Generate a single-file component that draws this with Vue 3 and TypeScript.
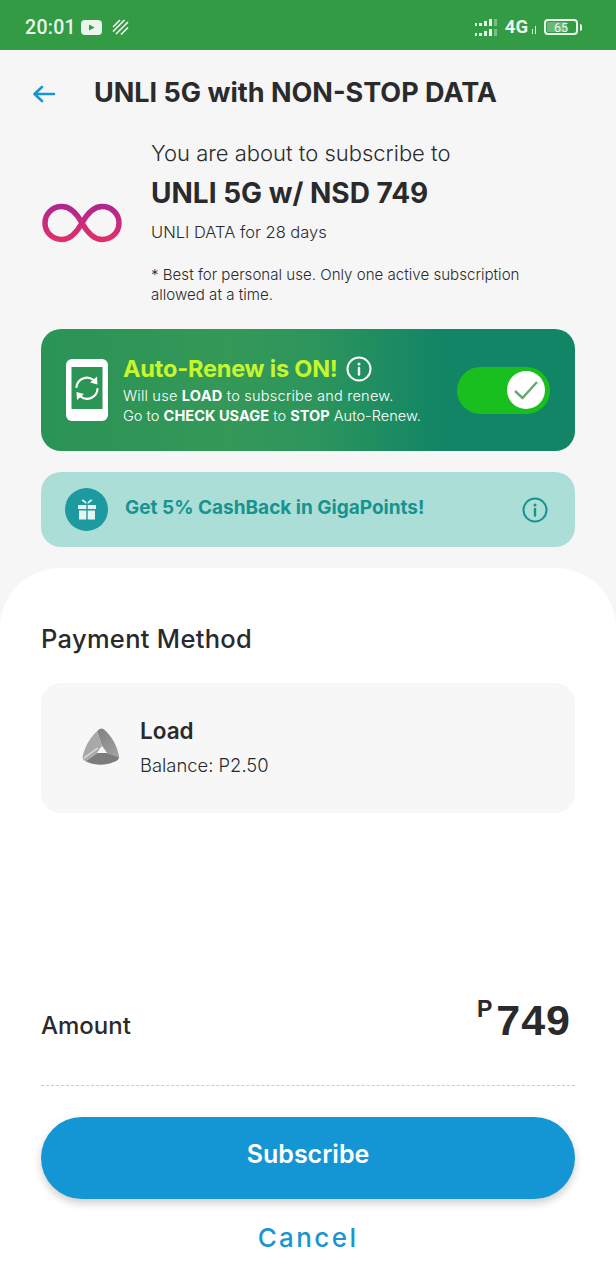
<script setup lang="ts">
const signalRows: number[] = [0, 1];
const bars: { w: number; h: number; o: number }[] = [
  { w: 2, h: 3, o: 1 },
  { w: 3, h: 3, o: 1 },
  { w: 3, h: 5, o: 1 },
  { w: 3, h: 7, o: 1 },
  { w: 3, h: 7, o: 0.4 }
];
</script>

<template>
  <div class="screen">
    <div class="status">
      <div class="status-left">
        <span class="time">20:01</span>
        <svg class="yt" width="21" height="15" viewBox="0 0 21 15"><rect width="21" height="15" rx="4" fill="#eaf5ec"/><path d="M8 4.600 13.600 7.500 8 10.400Z" fill="#339b44"/></svg>
        <svg class="stripe" width="17" height="17" viewBox="0 0 17 17" fill="none" stroke="#eaf5ec" stroke-width="1.700"><path d="M1 8 8 1M1 12.500 12.500 1M4 15 16 3M9 15.500 16 8.500"/></svg>
      </div>
      <div class="status-right">
        <div class="signal">
          <div v-for="r in signalRows" :key="r" class="signal-row">
            <i v-for="(b, n) in bars" :key="n" :style="{ width: b.w + 'px', height: b.h + 'px', opacity: b.o }"></i>
          </div>
        </div>
        <span class="net">4G</span>
        <svg width="6" height="8" viewBox="0 0 6 8" class="arrows" stroke="#eaf5ec" stroke-width="1" fill="none"><path d="M1.500 8V3M4.500 8V0"/></svg>
        <div class="battery"><div class="cell"><div class="fill"></div><span>65</span></div><i class="tip"></i></div>
      </div>
    </div>

    <div class="header">
      <svg class="back" width="24" height="20" viewBox="0 0 24 20" fill="none" stroke="#1a95d3" stroke-width="2.600" stroke-linecap="round" stroke-linejoin="round"><path d="M22 10H3M10 3 2.500 10 10 17"/></svg>
      <h1>UNLI 5G with NON-STOP DATA</h1>
    </div>

    <div class="offer">
      <svg class="infinity" width="82" height="42" viewBox="0 0 82 42" fill="none">
        <defs><linearGradient id="inf" x1="0" y1="0" x2="0" y2="1"><stop offset="0" stop-color="#b0278f"/><stop offset="1" stop-color="#e0306a"/></linearGradient></defs>
        <path d="M41 21C36 12 30 4.500 21 4.500 11.500 4.500 4 11.500 4 21 4 30.500 11.500 37.500 21 37.500 30 37.500 36 30 41 21 46 12 52 4.500 61 4.500 70.500 4.500 78 11.500 78 21 78 30.500 70.500 37.500 61 37.500 52 37.500 46 30 41 21Z" stroke="url(#inf)" stroke-width="5.500"/>
      </svg>
      <div class="offer-text">
        <p class="lead">You are about to subscribe to</p>
        <p class="plan">UNLI 5G w/ NSD 749</p>
        <p class="desc">UNLI DATA for 28 days</p>
        <p class="note">* Best for personal use. Only one active subscription allowed at a time.</p>
      </div>
    </div>

    <section class="renew">
      <svg class="phone" width="42" height="62" viewBox="0 0 42 62">
        <rect width="42" height="62" rx="6" fill="#fff"/>
        <rect x="5.500" y="8" width="31" height="42" fill="#2c9455"/>
        <g fill="none" stroke="#fff" stroke-width="2.200" stroke-linecap="round">
          <path d="M10.500 28a10.500 10.500 0 0 1 17-7"/>
          <path d="M31.500 30a10.500 10.500 0 0 1-17 7.500"/>
        </g>
        <path d="M31 17.500 31.500 25.500 24 23.500Z M11 41 10.500 33 18 35Z" fill="#fff"/>
      </svg>
      <div class="renew-text">
        <div class="renew-title">
          <span>Auto-Renew is ON!</span>
          <svg width="26" height="26" viewBox="0 0 26 26" fill="none"><circle cx="13" cy="13" r="11.500" stroke="#fff" stroke-width="2"/><circle cx="13" cy="8" r="1.500" fill="#fff"/><path d="M13 12v6.500" stroke="#fff" stroke-width="2.400" stroke-linecap="round"/></svg>
        </div>
        <p class="wide">Will use <b>LOAD</b> to subscribe and renew.</p>
        <p>Go to <b>CHECK USAGE</b> to <b>STOP</b> Auto-Renew.</p>
      </div>
      <div class="toggle">
        <div class="knob">
          <svg width="28" height="24" viewBox="0 0 28 24" fill="none"><path d="M3 13 10.500 20 25 4" stroke="#62a86f" stroke-width="2.400"/></svg>
        </div>
      </div>
    </section>

    <section class="cashback">
      <div class="gift">
        <svg width="20" height="21" viewBox="0 0 20 21" fill="#e6f5f4"><rect x="1" y="6" width="8.300" height="4"/><rect x="10.700" y="6" width="8.300" height="4"/><rect x="2" y="11.500" width="7.300" height="9"/><rect x="10.700" y="11.500" width="7.300" height="9"/><path d="M9.300 5 4.500 1.500 6 .3 9.300 3ZM10.700 5 15.500 1.500 14 .3 10.700 3Z"/></svg>
      </div>
      <span class="cash-text">Get 5% CashBack in GigaPoints!</span>
      <svg class="cash-info" width="26" height="26" viewBox="0 0 26 26" fill="none"><circle cx="13" cy="13" r="11.500" stroke="#17938f" stroke-width="2"/><circle cx="13" cy="8" r="1.500" fill="#17938f"/><path d="M13 12v6.500" stroke="#17938f" stroke-width="2.400" stroke-linecap="round"/></svg>
    </section>

    <section class="sheet">
      <h2>Payment Method</h2>
      <div class="method">
        <svg class="load-logo" width="38" height="38" viewBox="0 0 38 38">
          <defs>
            <clipPath id="tri"><path d="M17 1.500Q19.500-.5 22 1.500C29 7 35 17 37 28Q37.500 31 35 32.500C25 38 13 38 3 33Q0 31.500.7 28.500C3 17 10 7 17 1.500Z"/></clipPath>
            <linearGradient id="rightSec" x1="0" y1="0" x2="1" y2="1"><stop offset="0" stop-color="#7f7f7f"/><stop offset="1" stop-color="#a6a6a6"/></linearGradient>
          </defs>
          <g clip-path="url(#tri)">
            <path d="M20 18 14 0H40V30L25 25Z" fill="url(#rightSec)"/>
            <path d="M25 25 40 30V40H0V36L15 25Z" fill="#7c7c7c"/>
            <path d="M15 25 0 36V0H14L20 18Z" fill="#a8a8a8"/>
            <path d="M2 30 16 20" stroke="#d4d4d4" stroke-width="1.600"/>
            <path d="M20 18 25 25H15Z" fill="#f7f7f7"/>
          </g>
        </svg>
        <div>
          <p class="method-name">Load</p>
          <p class="method-bal">Balance: P2.50</p>
        </div>
      </div>
      <div class="amount">
        <span class="amount-label">Amount</span>
        <span class="amount-value"><sup>P</sup>749</span>
      </div>
      <div class="dash"></div>
      <button class="subscribe" type="button">Subscribe</button>
      <button class="cancel" type="button">Cancel</button>
    </section>
  </div>
</template>

<style>
html, body { margin: 0; background: #fff; }
</style>

<style scoped>
.screen { width: 616px; height: 1280px; display: flex; flex-direction: column; background: #f6f6f7; overflow: hidden; font-family: Inter, "Noto Sans", sans-serif; color: #2a2a2c; }
p, h1, h2 { margin: 0; }
.status { height: 50px; flex: none; background: #339b44; display: flex; justify-content: space-between; align-items: center; padding: 4px 34px 0 25px; box-sizing: border-box; color: #eaf5ec; font-family: Roboto, sans-serif; }
.status-left, .status-right { display: flex; align-items: center; }
.time { font-size: 19.500px; font-weight: 500; letter-spacing: .3px; }
.yt { margin-left: 5px; }
.stripe { margin-left: 10px; }
.signal { display: flex; flex-direction: column; gap: 3px; }
.signal-row { display: flex; align-items: flex-end; gap: 2px; height: 7px; }
.signal-row i { display: block; background: #eaf5ec; }
.net { font-size: 18.500px; font-weight: 700; margin-left: 8px; }
.arrows { margin: 5px 0 0 3px; }
.battery { display: flex; align-items: center; margin-left: 7px; }
.cell { width: 30px; height: 12px; border: 2px solid #eaf5ec; border-radius: 4px; position: relative; display: flex; align-items: center; justify-content: center; font-size: 12.500px; }
.fill { position: absolute; left: 1px; top: 1px; bottom: 1px; width: 65%; background: rgba(255,255,255,.28); border-radius: 1px; }
.cell span { position: relative; }
.tip { display: block; width: 2px; height: 7px; background: #eaf5ec; margin-left: 2px; border-radius: 0 2px 2px 0; }

.header { display: flex; align-items: center; height: 84px; flex: none; padding-left: 32px; box-sizing: border-box; }
.back { margin-top: 4px; }
.header h1 { font-size: 27px; font-weight: 700; margin-left: 38px; white-space: nowrap; color: #2b2b2d; }

.offer { display: flex; padding-left: 41px; height: 195px; flex: none; box-sizing: border-box; }
.infinity { margin-top: 68px; flex: none; }
.offer-text { margin-left: 28px; padding-top: 7px; }
.lead { font-size: 22px; font-weight: 300; line-height: 24px; white-space: nowrap; }
.plan { font-size: 28px; font-weight: 700; line-height: 34px; margin-top: 11px; white-space: nowrap; }
.desc { font-size: 16.500px; font-weight: 300; line-height: 22px; margin-top: 11px; white-space: nowrap; }
.note { font-size: 15.100px; font-weight: 300; line-height: 20px; margin-top: 22px; width: 400px; }

.renew { margin: 0 41px; height: 122px; flex: none; border-radius: 20px; box-sizing: border-box; padding: 0 25px; display: flex; align-items: center; background: linear-gradient(90deg, #2a9356 0%, #349858 35%, #2c955d 52%, #128566 75%, #128566 100%); color: #fff; }
.phone { flex: none; }
.renew-text { margin-left: 15px; flex: 1; }
.renew-title { display: flex; align-items: center; gap: 8px; font-size: 23.500px; font-weight: 700; color: #c6f62d; margin-bottom: 3px; letter-spacing: -.2px; white-space: nowrap; }
.renew-text p { font-size: 14.600px; line-height: 20px; font-weight: 300; white-space: nowrap; }
.renew-text p.wide { letter-spacing: .19px; }
.renew-text b { font-weight: 700; }
.toggle { width: 93px; height: 47px; flex: none; border-radius: 24px; background: #19bf1f; display: flex; align-items: center; justify-content: flex-end; padding-right: 5px; box-sizing: border-box; }
.knob { width: 38px; height: 38px; border-radius: 50%; background: #fff; display: flex; align-items: center; justify-content: center; }

.cashback { margin: 21px 41px 0; height: 75px; flex: none; box-sizing: border-box; border-radius: 20px; background: #abded7; padding: 0 27px 0 24px; display: flex; align-items: center; }
.gift { width: 43px; height: 43px; border-radius: 50%; background: #1c9aa0; display: flex; align-items: center; justify-content: center; flex: none; }
.cash-text { margin-left: 17px; padding-bottom: 4px; flex: 1; font-size: 19px; font-weight: 700; color: #17938f; white-space: nowrap; }
.cash-info { flex: none; }

.sheet { margin-top: 21px; flex: 1; background: #fff; border-radius: 60px 60px 0 0; padding: 56px 41px 0; display: flex; flex-direction: column; }
.sheet h2 { font-size: 25.500px; font-weight: 500; line-height: 30px; letter-spacing: .3px; }
.method { margin-top: 29px; height: 130px; flex: none; background: #f7f7f7; border-radius: 20px; display: flex; align-items: center; padding: 0 0 3px 41px; box-sizing: border-box; }
.load-logo { margin-right: 20px; }
.method-name { font-size: 22.500px; font-weight: 600; line-height: 28px; }
.method-bal { font-size: 18.400px; font-weight: 300; line-height: 24px; margin-top: 8px; }
.amount { margin-top: 181px; display: flex; justify-content: space-between; align-items: center; height: 62px; padding-right: 4px; }
.amount-label { font-size: 24px; font-weight: 500; }
.amount-value { font-family: "Liberation Sans", sans-serif; font-size: 43px; font-weight: 700; letter-spacing: 1px; display: flex; align-items: flex-start; line-height: 48px; margin-bottom: 10px; }
.amount-value sup { font-size: 23px; line-height: 26px; margin-right: 3px; vertical-align: baseline; }
.dash { margin-top: 29px; border-top: 1px dashed #c9cbcf; }
.subscribe { margin-top: 31px; height: 82px; flex: none; border: 0; border-radius: 41px; background: #1496d4; color: #fff; font: 600 25px Inter, sans-serif; padding: 0 0 8px; box-shadow: 0 4px 8px rgba(0,0,0,.2); }
.cancel { margin-top: 23px; border: 0; background: none; color: #1a95d3; font: 500 26px Inter, sans-serif; letter-spacing: 2.400px; padding: 0; }
</style>
